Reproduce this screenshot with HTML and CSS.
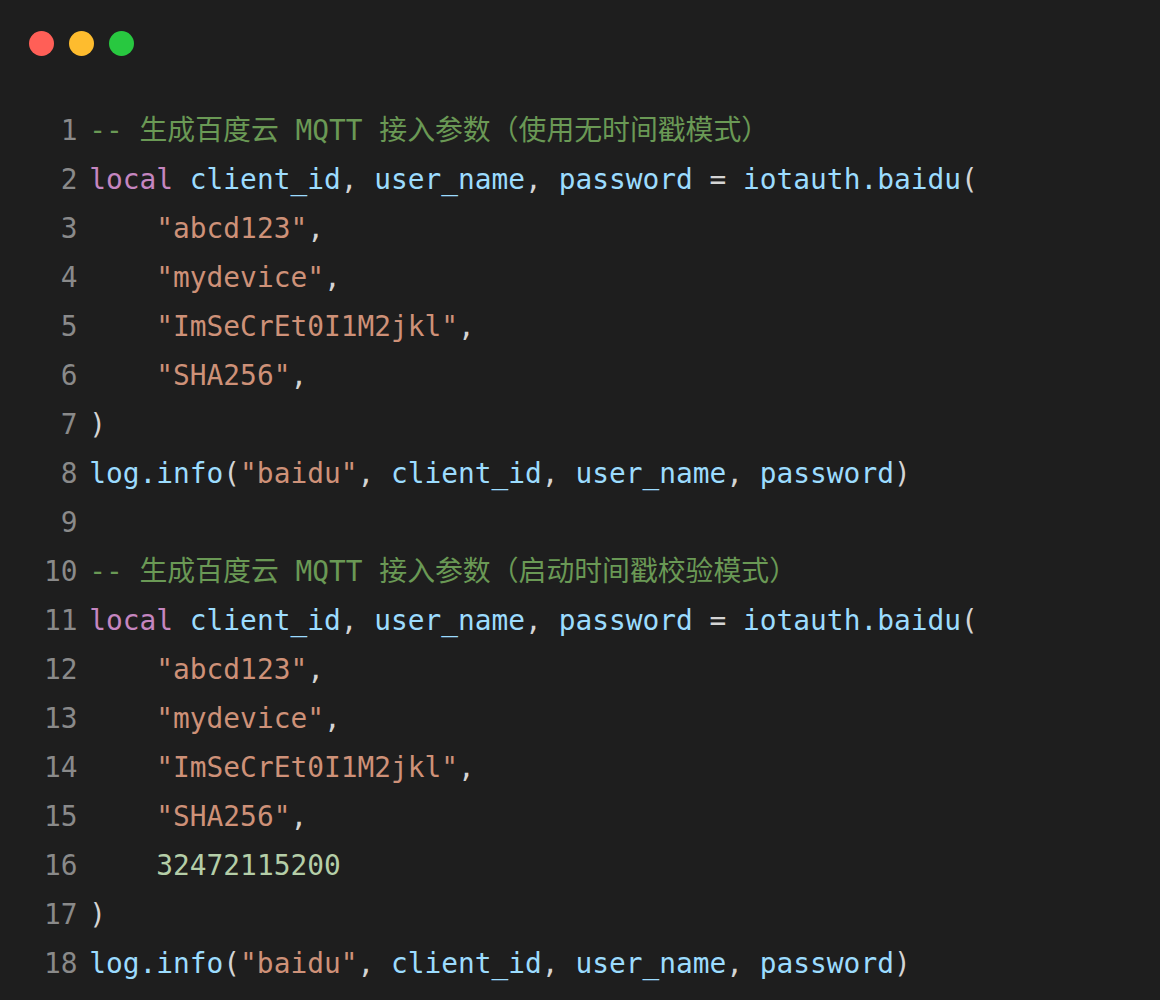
FILE: index.html
```html
<!DOCTYPE html>
<html>
<head>
<meta charset="utf-8">
<link rel="stylesheet" href="styles.css">
</head>
<body>
<div class="window">
  <div class="titlebar">
    <span class="dot red"></span>
    <span class="dot yellow"></span>
    <span class="dot green"></span>
  </div>
  <div class="code">
    <div class="line"><span class="ln">1</span><span class="src"><span class="c">-- 生成百度云 MQTT 接入参数（使用无时间戳模式）</span></span></div>
    <div class="line"><span class="ln">2</span><span class="src"><span class="k">local</span> <span class="v">client_id</span><span class="p">, </span><span class="v">user_name</span><span class="p">, </span><span class="v">password</span><span class="p"> = </span><span class="v">iotauth.baidu</span><span class="p">(</span></span></div>
    <div class="line"><span class="ln">3</span><span class="src">    <span class="s">"abcd123"</span><span class="p">,</span></span></div>
    <div class="line"><span class="ln">4</span><span class="src">    <span class="s">"mydevice"</span><span class="p">,</span></span></div>
    <div class="line"><span class="ln">5</span><span class="src">    <span class="s">"ImSeCrEt0I1M2jkl"</span><span class="p">,</span></span></div>
    <div class="line"><span class="ln">6</span><span class="src">    <span class="s">"SHA256"</span><span class="p">,</span></span></div>
    <div class="line"><span class="ln">7</span><span class="src"><span class="p">)</span></span></div>
    <div class="line"><span class="ln">8</span><span class="src"><span class="v">log.info</span><span class="p">(</span><span class="s">"baidu"</span><span class="p">, </span><span class="v">client_id</span><span class="p">, </span><span class="v">user_name</span><span class="p">, </span><span class="v">password</span><span class="p">)</span></span></div>
    <div class="line"><span class="ln">9</span><span class="src"></span></div>
    <div class="line"><span class="ln">10</span><span class="src"><span class="c">-- 生成百度云 MQTT 接入参数（启动时间戳校验模式）</span></span></div>
    <div class="line"><span class="ln">11</span><span class="src"><span class="k">local</span> <span class="v">client_id</span><span class="p">, </span><span class="v">user_name</span><span class="p">, </span><span class="v">password</span><span class="p"> = </span><span class="v">iotauth.baidu</span><span class="p">(</span></span></div>
    <div class="line"><span class="ln">12</span><span class="src">    <span class="s">"abcd123"</span><span class="p">,</span></span></div>
    <div class="line"><span class="ln">13</span><span class="src">    <span class="s">"mydevice"</span><span class="p">,</span></span></div>
    <div class="line"><span class="ln">14</span><span class="src">    <span class="s">"ImSeCrEt0I1M2jkl"</span><span class="p">,</span></span></div>
    <div class="line"><span class="ln">15</span><span class="src">    <span class="s">"SHA256"</span><span class="p">,</span></span></div>
    <div class="line"><span class="ln">16</span><span class="src">    <span class="n">32472115200</span></span></div>
    <div class="line"><span class="ln">17</span><span class="src"><span class="p">)</span></span></div>
    <div class="line"><span class="ln">18</span><span class="src"><span class="v">log.info</span><span class="p">(</span><span class="s">"baidu"</span><span class="p">, </span><span class="v">client_id</span><span class="p">, </span><span class="v">user_name</span><span class="p">, </span><span class="v">password</span><span class="p">)</span></span></div>
  </div>
</div>
</body>
</html>
```
FILE: styles.css
```css
html, body {
  margin: 0;
  padding: 0;
  background: #1e1e1e;
}
.window {
  width: 1160px;
  height: 1000px;
  background: #1e1e1e;
  overflow: hidden;
}
.titlebar {
  display: flex;
  gap: 15px;
  padding: 31px 0 0 29px;
  height: 74px;
  box-sizing: border-box;
}
.dot {
  width: 25px;
  height: 25px;
  border-radius: 50%;
}
.red { background: #ff5f57; }
.yellow { background: #febc2e; }
.green { background: #28c840; }
.code {
  padding: 32px 0 0 44px;
  font-family: "DejaVu Sans Mono", "Noto Sans CJK SC", monospace;
  font-size: 27.85px;
  line-height: 49px;
  color: #d4d4d4;
}
.line {
  display: flex;
  white-space: pre;
  height: 49px;
}
.ln {
  width: 2ch;
  text-align: right;
  color: #8a8a8a;
  margin-right: 0.7ch;
  flex: none;
}
.src { white-space: pre; }
.c { color: #6a9955; }
.k { color: #c586c0; }
.v { color: #9cdcfe; }
.s { color: #ce9178; }
.n { color: #b5cea8; }
.p { color: #d4d4d4; }
```
